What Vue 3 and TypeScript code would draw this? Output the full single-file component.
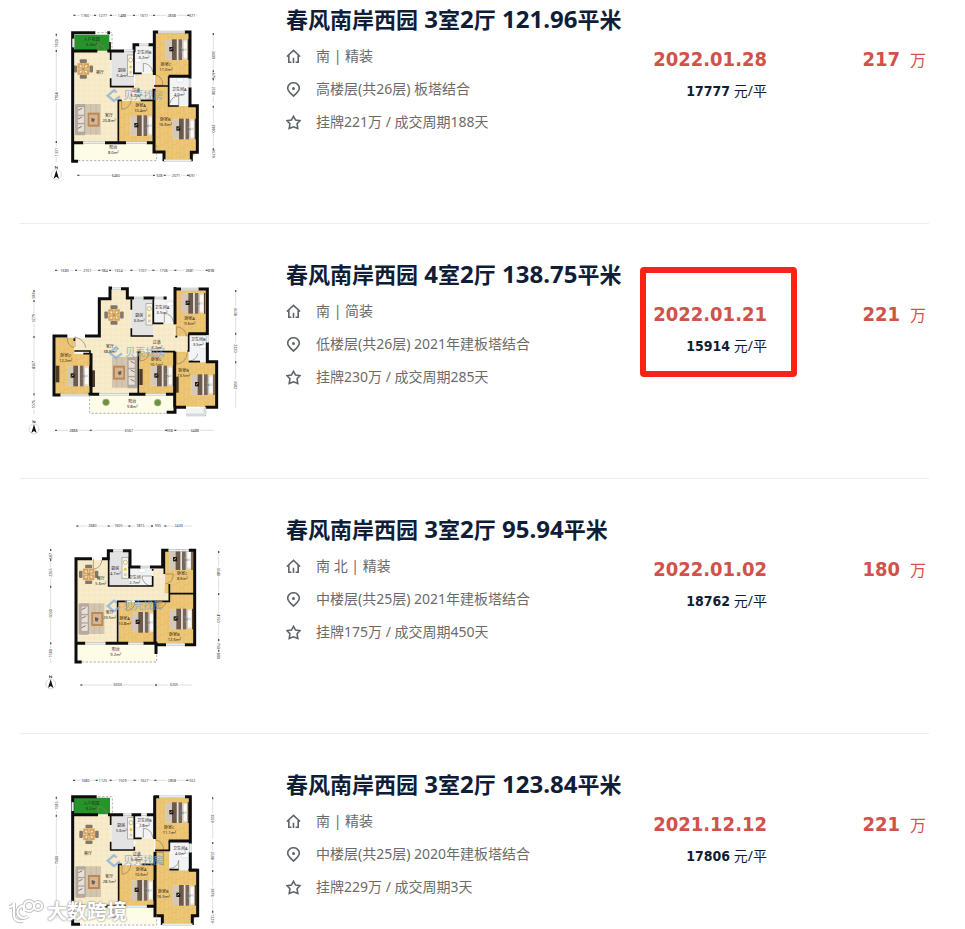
<script setup lang="ts">
type Kind = 'tile' | 'wood' | 'kitchen' | 'bath' | 'green' | 'balcony'
type Spot = [number, number]

interface Plan {
  shift: number
  floors: { kind: Kind; d: string }[]
  walls: string
  thin: string
  windows: string
  dashed: string
  doors: string
  beds: Spot[]
  plants: Spot[]
  cabinets: [number, number, number, number][]
  stove: Spot
  basins: Spot[]
  dining: Spot
  lounge: [number, number, boolean]
  rooms: [number, number, string, string][]
  brand: Spot
  compass: Spot | null
  top: [number, string, number][]
  topY: number
  bottom: [number, string, number][]
  bottomY: number
  left: [number, string, number][]
  leftX: number
  right: [number, string, number][]
  rightX: number
}

interface Listing {
  id: number
  name: string
  layout: string
  area: string
  facing: string
  floor: string
  deal: string
  date: string
  unit: string
  total: string
  marked: boolean
  plan: Plan
}

const planOne: Plan = {
  shift: 0,
  floors: [
    { kind: 'tile', d: 'M163 153H272V260H345V220H403V302H296V430H163Z' },
    { kind: 'kitchen', d: 'M274 153H342V258H274Z' },
    { kind: 'bath', d: 'M345 138H402V218H345Z' },
    { kind: 'green', d: 'M163 104H268V152H163Z' },
    { kind: 'wood', d: 'M405 98H508V228H448V318H530V455L512 478H430V455H405Z' },
    { kind: 'wood', d: 'M297 303H401V428H297Z' },
    { kind: 'bath', d: 'M450 231H510V316H450Z' },
    { kind: 'balcony', d: 'M162 430H405V480H162Z' },
  ],
  walls: 'M226 98H158V484H174M158 153H232M262 153H312M342 157V134H358M385 134H403M403 92V225M400 96H415M494 96H510V236M446 229H512M510 262V317H532V457H514V484M402 266V456H432V484M158 428H190M255 428H318M380 428H403M262 98H270',
  thin: 'M272 153V180M272 235V260H342M342 153V220H365M402 258H446V229M362 301H402M295 428V301H305M446 258V318H476M505 318H532M270 126V153',
  windows: 'M415 96H494M312 152H340M358 134H385M510 236V262M432 481H514M190 428H255M318 428H380M160 116V142',
  dashed: 'M232 98H276V150M174 482H410V435',
  doors: 'M232 153V132A24 24 0 0 1 256 153M370 216V190A28 28 0 0 1 398 216M404 224A28 28 0 0 1 428 256H404M305 301V328A28 28 0 0 0 333 301M476 318V288A28 28 0 0 0 450 310',
  beds: [[437, 116], [332, 344], [458, 354]],
  plants: [],
  cabinets: [],
  stove: [322, 165],
  basins: [[345, 175], [470, 234]],
  dining: [190, 207],
  lounge: [164, 312, false],
  rooms: [
    [215, 120, '入户花园', '6.3m²'], [240, 219, '餐厅', ''], [306, 213, '厨房', '5.4m²'],
    [372, 158, '卫生间B', '3.2m²'], [438, 196, '卧室C', '11.0m²'], [478, 270, '卫生间A', '4.0m²'],
    [348, 272, '过道', '5.2m²'], [362, 319, '卧室A', '10.4m²'], [267, 348, '客厅', '20.8m²'],
    [436, 360, '卧室B', '16.6m²'], [280, 445, '阳台', '8.0m²'],
  ],
  brand: [260, 287],
  compass: [109, 524],
  top: [[195, '1760', 163], [248, '1277', 225], [306, '1488', 273], [372, '1611', 342], [455, '2838', 402], [517, '671', 505]],
  topY: 46,
  bottom: [[288, '6460', 175], [418, '928', 402], [468, '2071', 434], [516, '691', 504]],
  bottomY: 526,
  left: [[130, '1820', 104], [290, '7704', 153], [456, '1331', 426]],
  leftX: 109,
  right: [[165, '3609', 102], [228, '675', 214], [272, '2508', 238], [385, '3990', 320], [460, '1679', 448]],
  rightX: 580,
}

const planTwo: Plan = {
  shift: 0,
  floors: [
    { kind: 'tile', d: 'M240 130H275V105H320V132H334V243H400V205H464V244H505V290H355V417H213V290H165V250H240Z' },
    { kind: 'kitchen', d: 'M334 133H400V243H334Z' },
    { kind: 'bath', d: 'M403 133H463V203H403Z' },
    { kind: 'wood', d: 'M466 106H558V244H466Z' },
    { kind: 'wood', d: 'M106 248H163V296H210V420H106Z' },
    { kind: 'bath', d: 'M508 238H562V321H508Z' },
    { kind: 'wood', d: 'M358 292H462V418H358Z' },
    { kind: 'wood', d: 'M466 290H506V322H588V455H466Z' },
    { kind: 'balcony', d: 'M213 420H462V474H213Z' },
    { kind: 'bath', d: 'M498 458H555V480H498Z' },
  ],
  walls: 'M98 243H142M102 239V420H122M195 243H238V131H270V99H276M303 101H322V129H342M370 129H404M430 129H440M465 96V208M462 102H483M535 102H562V240M505 236H565M562 262V320H590V457H556M498 457H465V472H440M464 290V457M213 295V420M205 418H238M327 418H377M438 418H464',
  thin: 'M334 133V164M334 220V243H400M400 133V205H430M462 205H466M466 245H472M163 250V258M163 288H210V296H190M355 420V290H362M395 290H466M506 237V288H502M506 320H540',
  windows: 'M276 101H303M483 102H535M342 129H370M404 129H430M562 240V262M122 420H205M238 418H327M377 418H438M498 480H555V457',
  dashed: 'M209 420V475H440',
  doors: 'M165 244V276M142 248A26 26 0 0 0 163 278M165 247A38 38 0 0 1 198 278M433 203V175A28 28 0 0 1 460 200M470 245V215A32 32 0 0 1 500 244M360 292V318A28 28 0 0 0 388 292M470 290V328A36 36 0 0 0 502 292M508 318A26 26 0 0 0 533 296',
  beds: [[486, 112], [141, 330], [392, 330], [514, 356]],
  plants: [[258, 442], [413, 443]],
  cabinets: [[107, 332, 11, 50], [214, 346, 11, 50], [358, 342, 10, 48], [466, 365, 10, 48]],
  stove: [378, 146],
  basins: [[440, 140], [538, 268]],
  dining: [282, 180],
  lounge: [268, 306, true],
  rooms: [
    [358, 184, '厨房', '6.6m²'], [426, 160, '卫生间A', '3.5m²'], [509, 193, '卧室A', '9.6m²'],
    [535, 255, '卫生间B', '3.5m²'], [410, 264, '过道', '7.2m²'], [270, 276, '客厅', '38.5m²'],
    [137, 303, '卧室D', '12.2m²'], [409, 316, '卧室C', '10.1m²'], [491, 347, '卧室B', '13.5m²'],
    [337, 441, '阳台', '9.8m²'],
  ],
  brand: [266, 293],
  compass: [42, 522],
  top: [[134, '1683', 108], [202, '2101', 168], [254, '984', 238], [295, '1324', 270], [367, '1707', 334], [431, '1706', 400], [509, '2681', 466], [573, '898', 560]],
  topY: 46,
  bottom: [[160, '2888', 108], [327, '6567', 212], [449, '938', 438], [524, '3488', 466]],
  bottomY: 526,
  left: [[122, '588', 108], [190, '3279', 138], [330, '4367', 246], [448, '1076', 418]],
  leftX: 42,
  right: [[170, '3638', 108], [280, '2320', 236], [390, '3582', 322]],
  rightX: 647,
}

const planThree: Plan = {
  shift: 0,
  floors: [
    { kind: 'tile', d: 'M172 150H266V230H398V178H432V228H450V274H293V400H172Z' },
    { kind: 'kitchen', d: 'M268 126H328V228H268Z' },
    { kind: 'bath', d: 'M330 177H397V227H330Z' },
    { kind: 'wood', d: 'M434 125H520V250H434Z' },
    { kind: 'wood', d: 'M450 252H520V400H410V276H450Z' },
    { kind: 'wood', d: 'M296 276H404V400H296Z' },
    { kind: 'balcony', d: 'M170 402H406V456H170Z' },
  ],
  walls: 'M216 146H168V456H185M246 146H265V122H280M308 122H330V171H362M390 171H428V121H446M506 121H524V404H494M408 404H438M168 400H196M256 400H325M370 400H408V432M405 274V404',
  thin: 'M266 150V228H328M328 171V205M328 228H398V198M398 177V182M433 121V192M448 222V274H398M448 251H524M293 400V274H320M345 274H405',
  windows: 'M446 121H506M280 122H308M362 171H390M438 404H494M196 400H256M325 400H370',
  dashed: 'M185 456H410V432',
  doors: 'M220 146V178A30 30 0 0 0 246 148M396 228A30 30 0 0 1 366 198H396M436 192H460A28 28 0 0 1 436 222M414 274V296A24 24 0 0 0 438 274M320 276V302A24 24 0 0 0 344 276',
  beds: [[448, 116], [336, 304], [450, 294]],
  plants: [],
  cabinets: [],
  stove: [306, 142],
  basins: [[357, 176]],
  dining: [206, 193],
  lounge: [175, 280, false],
  rooms: [
    [242, 206, '餐厅', '5.6m²'], [286, 176, '厨房', '4.7m²'], [344, 203, '卫生间', '2.7m²'],
    [487, 193, '卧室C', '8.6m²'], [269, 310, '客厅', '23.5m²'], [314, 328, '卧室A', '10.8m²'],
    [463, 374, '卧室B', '12.6m²'], [287, 421, '阳台', '9.2m²'],
  ],
  brand: [260, 288],
  compass: [92, 522],
  top: [[217, '2680', 172], [295, '1605', 266], [361, '1815', 328], [414, '955', 396], [476, '2433', 436]],
  topY: 48,
  bottom: [[293, '6303', 184], [462, '3205', 408]],
  bottomY: 525,
  left: [[138, '687', 120], [188, '2265', 150], [310, '6030', 230], [430, '1580', 400]],
  leftX: 92,
  right: [[185, '3540', 126], [325, '4150', 252], [408, '750', 390], [438, '880', 422]],
  rightX: 596,
}

const planFour: Plan = {
  shift: -60,
  floors: [
    { kind: 'tile', d: 'M222 150H332V255H405V220H463V298H356V424H222Z' },
    { kind: 'kitchen', d: 'M334 150H402V254H334Z' },
    { kind: 'bath', d: 'M406 150H462V218H406Z' },
    { kind: 'green', d: 'M222 98H330V148H222Z' },
    { kind: 'wood', d: 'M466 98H568V228H508V316H590V450L574 475H488V450H466Z' },
    { kind: 'bath', d: 'M510 231H570V314H510Z' },
    { kind: 'wood', d: 'M358 300H463V421H358Z' },
    { kind: 'balcony', d: 'M222 424H466V476H222Z' },
  ],
  walls: 'M290 95H218V478H240M218 149H294M324 149H370M394 149H424M440 149H466M464 92V222M462 95H478M555 95H571V236M506 228H573M571 262V316H593V452H577V480M465 260V452H487V480M218 424H250M315 424H378M440 424H465',
  thin: 'M332 149V180M332 230V255H403V245M403 149V220H425M465 256H508V228M508 314H536M565 314H593M356 424V298H366M425 298H465',
  windows: 'M478 95H555M370 149H394M424 149H440M571 236V262M487 478H577M250 424H315M378 424H440M218 112V138',
  dashed: 'M294 95H337V146M240 480H470V430',
  doors: 'M294 149V125A24 24 0 0 1 320 149M430 218V190A28 28 0 0 1 458 218M466 224A28 28 0 0 1 490 256H466M366 298V328A28 28 0 0 0 392 298M510 310A26 26 0 0 0 536 286V314M466 262H490V300A30 30 0 0 1 466 270',
  beds: [[497, 110], [393, 343], [518, 358]],
  plants: [],
  cabinets: [],
  stove: [383, 158],
  basins: [[406, 176], [545, 266]],
  dining: [267, 208],
  lounge: [225, 304, false],
  rooms: [
    [274, 117, '入户花园', '6.2m²'], [264, 266, '餐厅', ''], [364, 184, '厨房', '5.6m²'],
    [433, 168, '卫生间B', '2.8m²'], [508, 188, '卧室C', '11.1m²'], [541, 252, '卫生间A', '4.0m²'],
    [410, 270, '过道', '5.3m²'], [424, 316, '卧室A', '10.6m²'], [328, 336, '客厅', '28.5m²'],
    [490, 381, '卧室B', '16.5m²'], [342, 442, '阳台', '8.6m²'],
  ],
  brand: [320, 287],
  compass: null,
  top: [[256, '1680', 222], [309, '1125', 290], [367, '1509', 332], [433, '1627', 404], [516, '2858', 466], [577, '552', 562]],
  topY: 46,
  bottom: [],
  bottomY: 526,
  left: [[122, '1585', 98], [285, '7680', 152], [440, '1400', 420]],
  leftX: 169,
  right: [[160, '3559', 100], [272, '2508', 234], [382, '3978', 318], [460, '1229', 440]],
  rightX: 638,
}

const listings: Listing[] = [
  { id: 1, name: '春风南岸西园', layout: '3室2厅', area: '121.96平米', facing: '南 | 精装', floor: '高楼层(共26层) 板塔结合', deal: '挂牌221万 / 成交周期188天', date: '2022.01.28', unit: '17777', total: '217', marked: false, plan: planOne },
  { id: 2, name: '春风南岸西园', layout: '4室2厅', area: '138.75平米', facing: '南 | 简装', floor: '低楼层(共26层) 2021年建板塔结合', deal: '挂牌230万 / 成交周期285天', date: '2022.01.21', unit: '15914', total: '221', marked: true, plan: planTwo },
  { id: 3, name: '春风南岸西园', layout: '3室2厅', area: '95.94平米', facing: '南 北 | 精装', floor: '中楼层(共25层) 2021年建板塔结合', deal: '挂牌175万 / 成交周期450天', date: '2022.01.02', unit: '18762', total: '180', marked: false, plan: planThree },
  { id: 4, name: '春风南岸西园', layout: '3室2厅', area: '123.84平米', facing: '南 | 精装', floor: '中楼层(共25层) 2020年建板塔结合', deal: '挂牌229万 / 成交周期3天', date: '2021.12.12', unit: '17806', total: '221', marked: false, plan: planFour },
]

// Splits a heading into runs of Latin digits and runs of Chinese characters.
function runs(item: Listing): { text: string; digits: boolean }[] {
  const title = `${item.name} ${item.layout} ${item.area}`
  return (title.match(/[\d. ]+|[^\d. ]+/g) ?? []).map((text) => ({ text, digits: /[\d ]/.test(text) }))
}
</script>

<template>
  <main class="page">
    <svg class="defs" aria-hidden="true">
      <defs>
        <symbol id="bed" viewBox="0 0 70 64" overflow="visible">
          <rect x="0" y="4" width="70" height="58" fill="#ece8e2" />
          <rect x="0" y="4" width="54" height="58" fill="#d3c8b9" />
          <rect x="19" y="2" width="14" height="62" fill="#6b594c" />
          <rect x="38" y="2" width="11" height="62" fill="#78665a" />
          <rect x="34" y="2" width="4" height="62" fill="#e9e2d8" />
          <rect x="11" y="25" width="12" height="13" fill="#1d1b1a" />
          <path d="M14 33l6-4" stroke="#fff" stroke-width="2" />
          <rect x="53" y="7" width="12" height="24" rx="3" fill="#fbfaf8" stroke="#b9b1a5" />
          <rect x="53" y="35" width="12" height="24" rx="3" fill="#fbfaf8" stroke="#b9b1a5" />
          <path d="M68 2V64" stroke="#5b3b23" stroke-width="4" />
          <path d="M44 26l10 8-10 8" fill="none" stroke="#7296ad" stroke-width="3" />
        </symbol>
        <symbol id="dining" viewBox="0 0 60 60" overflow="visible">
          <rect x="19" y="0" width="22" height="11" rx="3" fill="#81776b" />
          <rect x="19" y="49" width="22" height="11" rx="3" fill="#81776b" />
          <rect x="0" y="19" width="11" height="22" rx="3" fill="#81776b" />
          <rect x="49" y="19" width="11" height="22" rx="3" fill="#81776b" />
          <path d="M12 12h36v36H12z" fill="#d9a25c" />
          <path d="M30 12v36M12 30h36" stroke="#ecca97" stroke-width="3" />
          <path d="M19 19l5 5M41 19l-5 5M19 41l5-5M41 41l-5-5" stroke="#f8efe0" stroke-width="4" />
          <circle cx="30" cy="30" r="4" fill="#8f9f6b" />
        </symbol>
        <symbol id="lounge" viewBox="0 0 80 96" overflow="visible">
          <rect x="24" y="0" width="54" height="92" fill="#d3c5ae" />
          <path d="M30 0V92M48 0V92M64 0V92" stroke="#c8b89f" stroke-width="3" />
          <rect x="39" y="26" width="36" height="42" fill="#b9895a" />
          <rect x="44" y="32" width="25" height="30" fill="#d9b48c" />
          <path d="M50 41l11 4-4 10-7-3z" fill="#5e6164" />
          <rect x="1" y="0" width="31" height="94" rx="4" fill="#b5aaa0" />
          <path d="M9 9h20v24H9zM9 35h20v23H9zM9 60h20v24H9z" fill="#e7e0d8" stroke="#8f857c" />
          <path d="M10 19l12-6M10 45l12-6M10 73l12-6" stroke="#89746b" stroke-width="3" />
        </symbol>
        <symbol id="stove" viewBox="0 0 20 66" overflow="visible">
          <rect width="19" height="64" fill="#f5f3e6" stroke="#9c9587" stroke-width="2" />
          <circle cx="10" cy="15" r="6" fill="#fff" stroke="#b39b54" stroke-width="2" />
          <circle cx="10" cy="36" r="4" fill="#ecbd22" />
          <path d="M6 48h8v8H6z" fill="#d5cfaf" />
        </symbol>
        <pattern id="plank" width="36" height="30" patternUnits="userSpaceOnUse">
          <rect width="36" height="30" fill="#edc676" />
          <path d="M0 0V30M12 0V30M24 0V30M0 9H12M12 22H24M24 14H36" stroke="#e4b965" stroke-width="2" />
        </pattern>
        <pattern id="tiles" width="16" height="16" patternUnits="userSpaceOnUse">
          <rect width="16" height="16" fill="#f5e8c3" />
          <path d="M0 8L8 0L16 8L8 16Z" fill="#f7ecce" />
        </pattern>
      </defs>
    </svg>

    <ul class="list">
      <li v-for="item in listings" :key="item.id" class="row">
        <svg class="plan" viewBox="0 0 690 600" role="img" :aria-label="item.layout">
          <g :transform="`translate(${item.plan.shift} 0)`">
            <path v-for="(f, i) in item.plan.floors" :key="i" :d="f.d" :class="f.kind" />
            <path class="door" :d="item.plan.doors" />
            <rect v-for="(c, i) in item.plan.cabinets" :key="'c' + i" :x="c[0]" :y="c[1]" :width="c[2]" :height="c[3]" fill="#4c3b2c" />
            <rect v-for="(b, i) in item.plan.basins" :key="'s' + i" :x="b[0]" :y="b[1]" width="20" height="12" rx="3" fill="#ffffff" stroke="#b8bec4" />
            <use v-for="(b, i) in item.plan.beds" :key="'b' + i" href="#bed" :x="b[0]" :y="b[1]" width="70" height="64" />
            <circle v-for="(p, i) in item.plan.plants" :key="'p' + i" :cx="p[0]" :cy="p[1]" r="10" class="plant" />
            <use href="#stove" :x="item.plan.stove[0]" :y="item.plan.stove[1]" width="20" height="66" />
            <use href="#dining" :x="item.plan.dining[0] - 29" :y="item.plan.dining[1] - 29" width="58" height="58" />
            <g v-if="item.plan.lounge[2]" :transform="`translate(${item.plan.lounge[0] + 86} ${item.plan.lounge[1]}) scale(-1 1)`">
              <use href="#lounge" width="80" height="96" />
            </g>
            <use v-else href="#lounge" :x="item.plan.lounge[0]" :y="item.plan.lounge[1]" width="80" height="96" />
            <path class="wall" :d="item.plan.walls" />
            <path class="wall thin" :d="item.plan.thin" />
            <path class="window" :d="item.plan.windows" />
            <path class="window-core" :d="item.plan.windows" />
            <path class="dashed" :d="item.plan.dashed" />

            <g class="brand" :transform="`translate(${item.plan.brand[0]} ${item.plan.brand[1]})`">
              <path d="M30 -10L22 -16L3 0L22 16L40 2" fill="none" stroke-width="7" />
              <text x="50" y="10">贝壳找房</text>
            </g>

            <g v-for="(r, i) in item.plan.rooms" :key="'r' + i" class="room">
              <text :x="r[0]" :y="r[1] + 3">{{ r[2] }}</text>
              <text v-if="r[3]" :x="r[0]" :y="r[1] + 18">{{ r[3] }}</text>
            </g>

            <g class="dims">
              <g v-for="(d, i) in item.plan.top" :key="'t' + i">
                <path :d="`M${d[2]} ${item.plan.topY}H${d[0] - 15}M${d[0] + 15} ${item.plan.topY}H${d[0] * 2 - d[2]}`" />
                <path class="tick" :d="`M${d[2] - 3} ${item.plan.topY}h6`" />
                <text :x="d[0]" :y="item.plan.topY + 4">{{ d[1] }}</text>
              </g>
              <g v-for="(d, i) in item.plan.bottom" :key="'m' + i">
                <path :d="`M${d[2]} ${item.plan.bottomY}H${d[0] - 15}M${d[0] + 15} ${item.plan.bottomY}H${d[0] * 2 - d[2]}`" />
                <path class="tick" :d="`M${d[2] - 3} ${item.plan.bottomY}h6`" />
                <text :x="d[0]" :y="item.plan.bottomY + 4">{{ d[1] }}</text>
              </g>
              <g v-for="(d, i) in item.plan.left" :key="'l' + i">
                <path :d="`M${item.plan.leftX} ${d[2]}V${d[0] - 15}M${item.plan.leftX} ${d[0] + 15}V${d[0] * 2 - d[2]}`" />
                <path class="tick" :d="`M${item.plan.leftX} ${d[2] - 3}v6`" />
                <text :transform="`translate(${item.plan.leftX + 4} ${d[0]}) rotate(-90)`">{{ d[1] }}</text>
              </g>
              <g v-for="(d, i) in item.plan.right" :key="'g' + i">
                <path :d="`M${item.plan.rightX} ${d[2]}V${d[0] - 15}M${item.plan.rightX} ${d[0] + 15}V${d[0] * 2 - d[2]}`" />
                <path class="tick" :d="`M${item.plan.rightX} ${d[2] - 3}v6`" />
                <text :transform="`translate(${item.plan.rightX - 4} ${d[0]}) rotate(90)`">{{ d[1] }}</text>
              </g>
            </g>

            <g v-if="item.plan.compass" :transform="`translate(${item.plan.compass[0]} ${item.plan.compass[1]})`">
              <circle r="15" fill="#ffffff" stroke="#c9c9c9" stroke-width="2" />
              <path d="M0 -14L8 12L0 6L-8 12Z" fill="#111111" />
              <path d="M-3 -18V-25L3 -18V-25" fill="none" stroke="#222222" stroke-width="2" />
            </g>
          </g>
        </svg>

        <div class="info">
          <h2 class="title">
            <span v-for="(run, i) in runs(item)" :key="i" :class="{ digits: run.digits }">{{ run.text }}</span>
          </h2>
          <p class="line">
            <svg class="icon" viewBox="0 0 16 16" aria-hidden="true">
              <path d="M1 8L8 1.4L15 8M3 6.6V14.2H5.8M13 6.6V14.2H10.2M8 14.8V9.4" />
            </svg>
            <span>{{ item.facing }}</span>
          </p>
          <p class="line">
            <svg class="icon" viewBox="0 0 16 16" aria-hidden="true">
              <path d="M8 15C5 12 1.8 9.6 1.8 6.6A6.2 5.8 0 0 1 14.2 6.6C14.2 9.6 11 12 8 15Z" />
              <circle class="dot" cx="8" cy="6.8" r="1.6" />
            </svg>
            <span>{{ item.floor }}</span>
          </p>
          <p class="line">
            <svg class="icon" viewBox="0 0 16 16" aria-hidden="true">
              <path d="M8 1.4L10.2 5.4L15 6L11.8 9.4L12.6 14.4L8 12.6L3.4 14.4L4.2 9.4L1 6L5.8 5.4Z" />
            </svg>
            <span>{{ item.deal }}</span>
          </p>
        </div>

        <div class="sale">
          <div class="date">{{ item.date }}</div>
          <div class="unit"><b>{{ item.unit }}</b> 元/平</div>
          <span v-if="item.marked" class="mark"></span>
        </div>

        <div class="total"><b>{{ item.total }}</b><span>万</span></div>
      </li>
    </ul>

    <div class="stamp">
      <svg class="stamp-logo" viewBox="0 0 36 26" aria-hidden="true">
        <path class="halo" d="M1 8Q5 8 6 4V17Q7 23 15 22M15 7A6 6 0 1 0 20 17M16 12V7A5 5 0 1 1 26 7A4 4 0 1 1 34 7A4 4 0 1 1 26 7A5 5 0 1 1 16 7" />
        <path class="core" d="M1 8Q5 8 6 4V17Q7 23 15 22M15 7A6 6 0 1 0 20 17M16 12V7A5 5 0 1 1 26 7A4 4 0 1 1 34 7A4 4 0 1 1 26 7A5 5 0 1 1 16 7" />
      </svg>
      <span>大数跨境</span>
    </div>
  </main>
</template>

<style>
body {
  margin: 0;
  background: #ffffff;
}
</style>

<style scoped>
.page {
  position: relative;
  box-sizing: border-box;
  height: 100vh;
  overflow: hidden;
  padding: 0 36px 0 20px;
  background: #ffffff;
  color: #101d37;
  font-family: "Noto Sans", "Noto Sans CJK SC", sans-serif;
}
.defs {
  position: absolute;
  width: 0;
  height: 0;
}
.list {
  margin: 0;
  padding: 0;
  list-style: none;
}
.row {
  display: flex;
  align-items: flex-start;
  padding: 31px 3px 23px 0;
  border-bottom: 1px solid #ededed;
}
.row:first-child {
  padding-top: 0;
}
.plan {
  flex: none;
  width: 230px;
  height: 200px;
  margin-right: 36px;
}
.info {
  flex: 1;
  min-width: 0;
}
.title {
  margin: 3px 0 0;
  font-size: 22px;
  line-height: 32px;
  font-weight: 700;
  white-space: pre;
}
.title .digits {
  font-size: 24px;
  line-height: 30px;
}
.line {
  display: flex;
  align-items: center;
  gap: 15px;
  margin: 0 0 9px;
  font-size: 14px;
  line-height: 24px;
  color: #6b6b6b;
  white-space: nowrap;
}
.title + .line {
  margin-top: 9px;
}
.icon {
  flex: none;
  width: 15px;
  height: 15px;
  fill: none;
  stroke: #606468;
  stroke-width: 1.7;
}
.icon .dot {
  fill: #606468;
  stroke: none;
}
.sale {
  position: relative;
  flex: none;
  padding-top: 44px;
  text-align: right;
}
.date,
.total b,
.unit b {
  font-family: "DejaVu Sans Condensed", "DejaVu Sans", sans-serif;
  font-weight: 700;
}
.date,
.total b {
  font-size: 20px;
  line-height: 30px;
  color: #d0524a;
}
.unit {
  margin-top: 4px;
  font-size: 14px;
  line-height: 26px;
}
.mark {
  position: absolute;
  top: 12px;
  left: -13px;
  right: -30px;
  height: 98px;
  border: 6px solid #fb2318;
  border-radius: 4px;
}
.total {
  display: flex;
  flex: none;
  align-items: baseline;
  justify-content: flex-end;
  gap: 10px;
  width: 159px;
  padding-top: 44px;
  color: #d0524a;
  font-size: 16px;
  line-height: 30px;
}

.tile {
  fill: url(#tiles);
}
.wood {
  fill: url(#plank);
}
.kitchen {
  fill: #e3e3e4;
}
.bath {
  fill: #f1f3f5;
}
.green {
  fill: #27942b;
}
.balcony {
  fill: #fdfce6;
}
.plant {
  fill: #6f8f45;
  stroke: #a5bd83;
  stroke-width: 2;
}
.wall {
  fill: none;
  stroke: #0d0d0d;
  stroke-width: 9;
}
.thin {
  stroke-width: 5;
}
.window {
  fill: none;
  stroke: #b9bdc0;
  stroke-width: 7;
}
.window-core {
  fill: none;
  stroke: #f4f6f7;
  stroke-width: 3;
}
.dashed {
  fill: none;
  stroke: #8c8c8c;
  stroke-width: 2;
  stroke-dasharray: 7 5;
}
.door {
  fill: none;
  stroke: #8d7b5a;
  stroke-width: 2;
}
.brand {
  opacity: 0.75;
}
.brand path {
  stroke: #86aede;
}
.brand text {
  fill: #86a7cf;
  font-size: 30px;
  font-weight: 500;
}
.room text {
  fill: #2a241a;
  font-size: 12px;
  text-anchor: middle;
}
.dims text {
  fill: #333333;
  font-size: 11px;
  text-anchor: middle;
}
.dims path {
  fill: none;
  stroke: #d0d0d0;
  stroke-width: 2;
}
.dims .tick {
  stroke: #555555;
  stroke-width: 4;
}

.stamp {
  position: absolute;
  left: 8px;
  bottom: 2px;
  display: flex;
  align-items: center;
  gap: 3px;
  color: #ffffff;
  font-size: 20px;
  line-height: 30px;
  font-weight: 700;
  text-shadow: 0 0 2px #999999, 0 0 2px #999999;
}
.stamp-logo {
  width: 36px;
  height: 26px;
  fill: none;
}
.halo {
  stroke: #c4c4c4;
  stroke-width: 4;
}
.core {
  stroke: #ffffff;
  stroke-width: 2;
}
</style>
